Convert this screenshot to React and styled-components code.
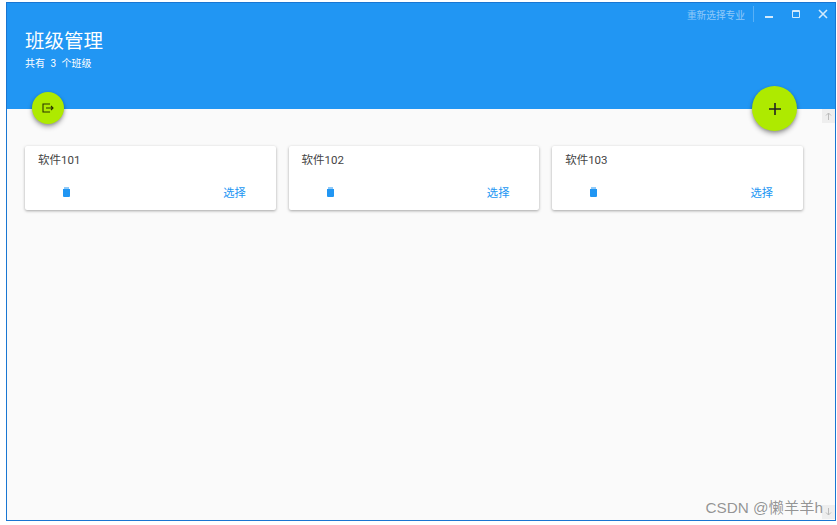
import styled, { createGlobalStyle } from 'styled-components'

const Global = createGlobalStyle`
  html, body { margin: 0; padding: 0; background: #fff; }
  body { font-family: Roboto, "Noto Sans CJK SC", sans-serif; }
`

const Page = styled.div`
  width: 837px;
  height: 525px;
  padding: 2px 1px 4px 6px;
  box-sizing: border-box;
`

const Frame = styled.div`
  position: relative;
  height: 100%;
  box-sizing: border-box;
  border: 1px solid #1976d2;
  display: flex;
  flex-direction: column;
  overflow: hidden;
`

const Header = styled.header`
  height: 106px;
  flex-shrink: 0;
  background: #2196f3;
  color: #fff;
  padding: 26px 0 0 18px;
  box-sizing: border-box;
`

const Title = styled.div`
  font-size: 19.5px;
  line-height: 26px;
`

const Sub = styled.div`
  margin-top: 2px;
  font-size: 10px;
  line-height: 14px;
  word-spacing: 3px;
`

const WindowBar = styled.div`
  position: absolute;
  top: 3px;
  right: 7px;
  display: flex;
  align-items: center;
  height: 16px;
`

const SwitchLink = styled.span`
  font-size: 9.7px;
  color: rgba(255, 255, 255, 0.5);
  padding: 2px 8px 0 0;
  border-right: 1px solid rgba(255, 255, 255, 0.25);
  margin-right: 10px;
`

const WinBtn = styled.svg`
  width: 10px;
  height: 10px;
  margin-left: ${p => p.$gap || 0}px;
  fill: none;
  stroke: #fff;
  opacity: 0.8;
`

const Fab = styled.button`
  position: absolute;
  border: 0;
  padding: 0;
  border-radius: 50%;
  background: #aeea00;
  display: flex;
  align-items: center;
  justify-content: center;
  box-shadow: 0 3px 5px rgba(0, 0, 0, 0.3), 0 1px 3px rgba(0, 0, 0, 0.2);
  left: ${p => p.$left}px;
  top: ${p => p.$top}px;
  width: ${p => p.$size}px;
  height: ${p => p.$size}px;
`

const Content = styled.main`
  flex: 1;
  background: #fafafa;
  padding: 37px 0 0 18px;
  display: flex;
  gap: 12.7px;
  align-items: flex-start;
`

const Card = styled.div`
  width: 250.9px;
  height: 64px;
  background: #fff;
  border-radius: 2px;
  box-shadow: 0 1px 3px rgba(0, 0, 0, 0.35);
  box-sizing: border-box;
  padding: 6px 0 0 13px;
`

const CardName = styled.div`
  font-size: 11.5px;
  line-height: 16px;
  color: #444;
`

const CardActions = styled.div`
  margin-top: 14px;
  display: flex;
  align-items: center;
  justify-content: space-between;
  padding: 0 30px 0 25px;
`

const Pick = styled.span`
  font-size: 11.3px;
  line-height: 16px;
  padding-top: 4px;
  color: #2196f3;
`

const ScrollBtn = styled.div`
  position: absolute;
  right: 0;
  width: 13px;
  height: 14px;
  background: #eeeeee;
  color: #bbb;
  display: flex;
  align-items: center;
  justify-content: center;
  top: ${p => p.$top}px;
`

const Watermark = styled.div`
  position: absolute;
  right: 12px;
  bottom: 2px;
  font-size: 15.3px;
  line-height: 20px;
  color: rgba(60, 60, 60, 0.55);
  font-family: "Liberation Sans", "Noto Sans CJK SC", sans-serif;
`

const Arrow = ({ down }) => (
  <svg width="7" height="8" viewBox="0 0 7 8" fill="none" stroke="currentColor">
    {down
      ? <path d="M3.5 0v7M1 4.5l2.5 2.5L6 4.5" />
      : <path d="M3.5 8V1M1 3.5L3.5 1 6 3.5" />}
  </svg>
)

const classes = ['软件101', '软件102', '软件103']

const App = () => (
  <Page>
    <Global />
    <Frame>
      <Header>
        <Title>班级管理</Title>
        <Sub>共有 3 个班级</Sub>
      </Header>
      <WindowBar>
        <SwitchLink>重新选择专业</SwitchLink>
        <WinBtn viewBox="0 0 10 10" strokeWidth="2"><path d="M1 8h8" /></WinBtn>
        <WinBtn $gap={17} viewBox="0 0 10 10"><path d="M1.5 1.5h7v7h-7z" /><path d="M1.5 2.5h7" /></WinBtn>
        <WinBtn $gap={17} viewBox="0 0 10 10" strokeWidth="1.6"><path d="M1 1l8 8M9 1l-8 8" /></WinBtn>
      </WindowBar>
      <Fab $left={25} $top={89} $size={32}>
        <svg width="12" height="10" viewBox="0 0 12 10" fill="none" stroke="#2a3300" strokeWidth="1.1">
          <path d="M7.5 1.5V1H1v8h6.5v-.5" />
          <path d="M4 5h7M9 3l2 2-2 2" />
        </svg>
      </Fab>
      <Fab $left={745} $top={83} $size={45}>
        <svg width="12" height="12" viewBox="0 0 12 12" stroke="#222" strokeWidth="1.6">
          <path d="M6 0v12M0 6h12" />
        </svg>
      </Fab>
      <Content>
        {classes.map(name => (
          <Card key={name}>
            <CardName>{name}</CardName>
            <CardActions>
              <svg width="7" height="10" viewBox="0 0 7 10" fill="#2196f3">
                <path d="M0 2h7v7a1 1 0 0 1-1 1H1a1 1 0 0 1-1-1zM1 .4h5v1H1z" />
              </svg>
              <Pick>选择</Pick>
            </CardActions>
          </Card>
        ))}
      </Content>
      <ScrollBtn $top={106}><Arrow /></ScrollBtn>
      <ScrollBtn $top={502}><Arrow down /></ScrollBtn>
      <Watermark>CSDN @懒羊羊h</Watermark>
    </Frame>
  </Page>
)

export default App
